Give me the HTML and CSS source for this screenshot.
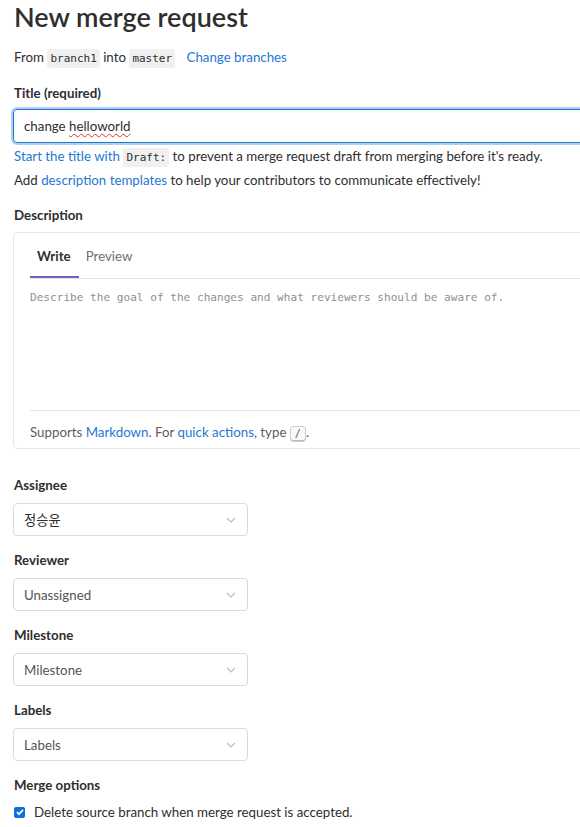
FILE: index.html
```html
<!DOCTYPE html>
<html lang="en">
<head>
<meta charset="utf-8">
<title>New merge request</title>
<link rel="stylesheet" href="styles.css">
</head>
<body>
<div class="page">
  <h1 class="page-title">New merge request</h1>
  <p class="branch-info">From <code>branch1</code> into <code>master</code> <a class="link change" href="#">Change branches</a></p>

  <div class="field title-field">
    <label class="label">Title (required)</label>
    <div class="title-input"><span class="typed">change <span class="misspelled">helloworld</span></span></div>
    <p class="hint"><a class="link" href="#">Start the title with</a> <code>Draft:</code> to prevent a merge request draft from merging before it's ready.</p>
    <p class="hint second">Add <a class="link" href="#">description templates</a> to help your contributors to communicate effectively!</p>
  </div>

  <div class="field desc-field">
    <label class="label">Description</label>
    <div class="md-box">
      <div class="tabs">
        <span class="tab active">Write</span>
        <span class="tab">Preview</span>
      </div>
      <div class="md-area">Describe the goal of the changes and what reviewers should be aware of.</div>
      <div class="md-footer">Supports <a class="link" href="#">Markdown</a>. For <a class="link" href="#">quick actions</a>, type <kbd>/</kbd>.</div>
    </div>
  </div>

  <div class="field select-field first">
    <label class="label">Assignee</label>
    <div class="select"><span class="value">정승윤</span><svg class="chev" width="10" height="6" viewBox="0 0 10 6"><path d="M1 1l4 4 4-4" fill="none" stroke="#bdbdbd" stroke-width="1.2"/></svg></div>
  </div>
  <div class="field select-field">
    <label class="label">Reviewer</label>
    <div class="select"><span class="value muted">Unassigned</span><svg class="chev" width="10" height="6" viewBox="0 0 10 6"><path d="M1 1l4 4 4-4" fill="none" stroke="#bdbdbd" stroke-width="1.2"/></svg></div>
  </div>
  <div class="field select-field">
    <label class="label">Milestone</label>
    <div class="select"><span class="value muted">Milestone</span><svg class="chev" width="10" height="6" viewBox="0 0 10 6"><path d="M1 1l4 4 4-4" fill="none" stroke="#bdbdbd" stroke-width="1.2"/></svg></div>
  </div>
  <div class="field select-field">
    <label class="label">Labels</label>
    <div class="select"><span class="value muted">Labels</span><svg class="chev" width="10" height="6" viewBox="0 0 10 6"><path d="M1 1l4 4 4-4" fill="none" stroke="#bdbdbd" stroke-width="1.2"/></svg></div>
  </div>
  <div class="field select-field">
    <label class="label">Merge options</label>
    <div class="check-row">
      <span class="checkbox"><svg width="10" height="10" viewBox="0 0 10 10"><path d="M2 5.2l2 2 4-4.4" fill="none" stroke="#fff" stroke-width="1.8"/></svg></span>
      <span>Delete source branch when merge request is accepted.</span>
    </div>
  </div>
</div>
</body>
</html>
```

FILE: styles.css
```css
html, body {
  margin: 0;
  padding: 0;
  background: #fff;
  overflow: hidden;
}
body {
  font-family: "Lato", "Noto Sans CJK KR", sans-serif;
  font-size: 13.3px;
  color: #2e2e2e;
  line-height: 20px;
}
.page {
  width: 1000px;
  padding: 0 0 0 14px;
}
.page-title {
  margin: 0;
  padding-top: 0;
  font-size: 27px;
  line-height: 34px;
  font-weight: 600;
  color: #2e2e2e;
}
.branch-info {
  margin: 12px 0 0;
  line-height: 22px;
}
code {
  font-family: "DejaVu Sans Mono", monospace;
  font-size: 11px;
  line-height: 1;
  background: #f0f0f0;
  color: #2e2e2e;
  border-radius: 3px;
  padding: 3px 3px;
}
.link {
  color: #1f78d1;
  text-decoration: none;
}
.change {
  margin-left: 8px;
}
.field {
  margin-top: 14px;
}
.title-field {
  margin-top: 15px;
}
.label {
  display: block;
  font-weight: 700;
  line-height: 20px;
  margin-bottom: 8px;
}
.title-field .label {
  margin-bottom: 6px;
}
.title-input {
  box-sizing: border-box;
  width: 980px;
  height: 34px;
  margin-left: -1px;
  border: 1px solid #1f78d1;
  border-radius: 4px;
  box-shadow: 0 0 0 2px rgba(31, 120, 209, 0.35);
  padding: 6px 10px;
  line-height: 20px;
}
.misspelled {
  text-decoration: underline wavy #e0352b;
  text-decoration-thickness: 1px;
  text-underline-offset: 2px;
}
.hint {
  margin: 2px 0 0;
  line-height: 22px;
  color: #2e2e2e;
}
.desc-field {
  margin-top: 14px;
}
.desc-field .label {
  margin-bottom: 7px;
}
.md-box {
  width: 980px;
  margin-left: -1px;
  border: 1px solid #e5e5e5;
  border-radius: 4px;
  padding: 0 0 0 16px;
  box-sizing: border-box;
}
.tabs {
  display: flex;
  border-bottom: 1px solid #e5e5e5;
  margin-top: 3px;
}
.tab {
  padding: 10px 8px 12px 7px;
  color: #707070;
  line-height: 20px;
}
.tab.active {
  color: #2e2e2e;
  font-weight: 700;
  box-shadow: inset 0 -2px 0 #6666c4;
}
.md-area {
  font-family: "DejaVu Sans Mono", monospace;
  font-size: 11.1px;
  color: #8f8f8f;
  height: 132px;
  box-sizing: border-box;
  padding-top: 11px;
  border-bottom: 1px solid #e5e5e5;
  line-height: 16px;
}
.md-footer {
  padding: 10px 0 5px;
  color: #5e5e5e;
  line-height: 22px;
  height: 22px;
}
kbd {
  display: inline-block;
  font-family: "DejaVu Sans Mono", monospace;
  font-size: 10px;
  line-height: 14px;
  padding: 0 4px;
  color: #555;
  background: #fafafa;
  border: 1px solid #ccc;
  border-radius: 3px;
  box-shadow: inset 0 -1px 0 #bbb;
  vertical-align: middle;
}
.select-field {
  margin-top: 14px;
}
.select-field.first {
  margin-top: 26px;
}
.select {
  box-sizing: border-box;
  width: 235px;
  height: 33px;
  margin-left: -1px;
  border: 1px solid #dbdbdb;
  border-radius: 4px;
  display: flex;
  align-items: center;
  justify-content: space-between;
  padding: 0 10px;
}
.value.muted {
  color: #555;
}
.chev {
  margin-right: 1px;
}
.check-row {
  display: flex;
  align-items: center;
  gap: 9px;
  margin-top: -1px;
}
.checkbox {
  width: 11px;
  height: 11px;
  border-radius: 2px;
  background: #0b6fe0;
  display: flex;
  align-items: center;
  justify-content: center;
}
```
